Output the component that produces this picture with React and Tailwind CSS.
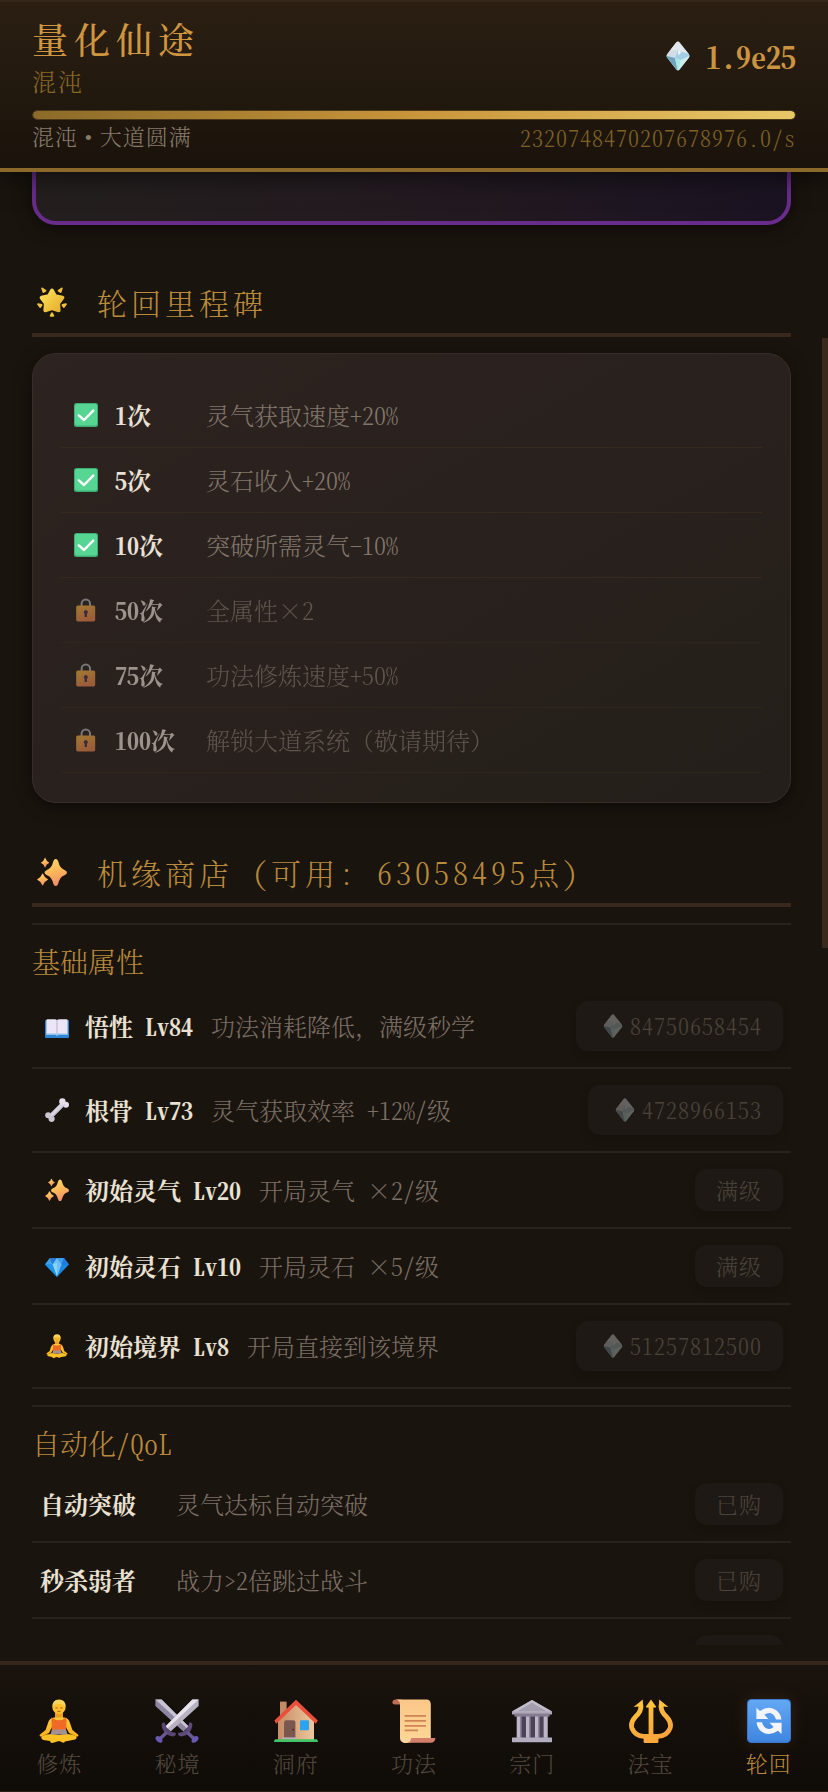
import React from "react";

/* ---------- Icons ---------- */

function SpiritStone({ className }) {
  return (
    <svg viewBox="0 0 24 30" className={className} aria-hidden="true">
      <path d="M12 0.4 Q13 0.4 13.8 1.6 L23 13.2 Q24 15 23 16.6 L13.6 28.8 Q12 30.4 10.4 28.8 L1 16.6 Q0 15 1 13.2 L10.2 1.6 Q11 0.4 12 0.4Z" fill="#b9dcea" />
      <path d="M12 0.6 L22.6 13 L12 9.5 L4 9.6 L10.2 1.6Z" fill="#e4e8ec" />
      <path d="M4 9.6 L12 9.5 L9 17 L0.6 15Z" fill="#d3dde8" />
      <path d="M12 9.5 L22.6 13 L23.4 15 L15 19 L9 17Z" fill="#a3cfe6" />
      <path d="M0.6 15 L9 17 L11.5 29.4 L1 16.6Z" fill="#6fa3bd" />
      <path d="M9 17 L15 19 L11.8 29.6Z" fill="#a5e8e4" />
      <path d="M23.4 15 L15 19 L12 29.6 L23 16.6Z" fill="#cdeeea" />
      <path d="M12 9.5 L15.5 11 L12.5 14.5Z" fill="#f4fbff" />
    </svg>
  );
}

function GlowingStar({ className }) {
  return (
    <svg viewBox="0 0 32 32" className={className} aria-hidden="true">
      <defs>
        <linearGradient id="star" x1="0" y1="0" x2="1" y2="1">
          <stop offset="0" stopColor="#ffe25a" />
          <stop offset="1" stopColor="#e2ad2c" />
        </linearGradient>
      </defs>
      <path
        d="M16 3.6 L19.4 9.8 L27.2 11.4 L22.6 17.6 L23.2 25 L16 22.6 L8.8 25 L9.4 17.6 L4.8 11.4 L12.6 9.8Z"
        fill="url(#star)" stroke="url(#star)" strokeWidth="4" strokeLinejoin="round"
      />
      <g fill="#f2c13a" stroke="#f2c13a" strokeWidth="2" strokeLinejoin="round">
        <path d="M5.6 1.6 L9 4 L6.8 5.4Z" />
        <path d="M26.4 1.6 L23 4 L25.2 5.4Z" />
        <path d="M1.2 18.4 L4.8 19.2 L3.4 21.4Z" />
        <path d="M30.8 18.4 L27.2 19.2 L28.6 21.4Z" />
        <path d="M14.6 30.6 L16 28 L17.4 30.6Z" />
      </g>
    </svg>
  );
}

function Sparkles({ className }) {
  return (
    <svg viewBox="0 0 32 32" className={className} aria-hidden="true">
      <defs>
        <linearGradient id="spark" x1="0" y1="0" x2="0.3" y2="1">
          <stop offset="0" stopColor="#ffdc6c" />
          <stop offset="0.55" stopColor="#fdb858" />
          <stop offset="1" stopColor="#f2906a" />
        </linearGradient>
      </defs>
      <g fill="url(#spark)">
        <path d="M20 2 Q21.8 2 22.6 4.6 Q24.4 12.4 29.4 13.8 Q32 14.8 32 16.6 Q32 18.4 29.4 19.4 Q24.4 21 22.6 28.4 Q21.8 31 20 31 Q18.2 31 17.4 28.4 Q15.6 21 10.6 19.4 Q8 18.4 8 16.6 Q8 14.8 10.6 13.8 Q15.6 12.4 17.4 4.6 Q18.2 2 20 2Z" />
        <path d="M8.6 0.6 Q10 4.8 13.2 6 Q10 7.2 8.6 11.4 Q7.2 7.2 4 6 Q7.2 4.8 8.6 0.6Z" />
        <path d="M6 17.4 Q7.8 22 12 24 Q7.8 26 6 30.6 Q4.2 26 0 24 Q4.2 22 6 17.4Z" />
      </g>
    </svg>
  );
}

function CheckMark({ className }) {
  return (
    <svg viewBox="0 0 24 24" className={className} aria-hidden="true">
      <rect width="24" height="24" rx="2.5" fill="#3fae74" />
      <rect x="1" y="1" width="22" height="21.5" rx="2" fill="#57d592" />
      <path d="M4.8 12.4 L10 17 L19.2 7.6" fill="none" stroke="#fff" strokeWidth="2.4" strokeLinecap="round" strokeLinejoin="round" />
    </svg>
  );
}

function Lock({ className }) {
  return (
    <svg viewBox="0 0 24 24" className={className} aria-hidden="true">
      <defs>
        <linearGradient id="lock" x1="0" y1="0" x2="0.4" y2="1">
          <stop offset="0" stopColor="#f2b53f" />
          <stop offset="1" stopColor="#e8844c" />
        </linearGradient>
      </defs>
      <path d="M7.6 9 V5.6 a4.2 4.2 0 0 1 8.4 0 V9" fill="none" stroke="#b4aeb4" strokeWidth="2" />
      <rect x="2.2" y="7.4" width="19" height="16" rx="1.6" fill="url(#lock)" />
      <path d="M11.8 12 a2.1 2.1 0 0 1 1.2 3.8 V19 H10.6 V15.8 a2.1 2.1 0 0 1 1.2 -3.8Z" fill="#4b3550" />
    </svg>
  );
}

function Book({ className }) {
  return (
    <svg viewBox="0 0 24 24" className={className} aria-hidden="true">
      <path d="M0 7 Q0 6 1 6 H23 Q24 6 24 7 V23 Q24 24 23 24 H1 Q0 24 0 23Z" fill="#2f86d4" />
      <path d="M1.4 6 Q1.4 5.2 2.6 5.2 H9.6 Q11.6 5.2 12 6.6 Q12.4 5.2 14.4 5.2 H21.4 Q22.6 5.2 22.6 6 V20.6 H14 Q12.6 20.6 12 21.8 Q11.4 20.6 10 20.6 H1.4Z" fill="#ece6f6" />
      <path d="M1.4 19.4 H10.4 Q11.6 19.4 12 20.8 Q12.4 19.4 13.6 19.4 H22.6 V21 H13.6 Q12.6 21 12 22.2 Q11.4 21 10.4 21 H1.4Z" fill="#8cc4ee" />
      <path d="M12 6.6 V20.6" stroke="#b5acc6" strokeWidth="0.9" />
    </svg>
  );
}

function Bone({ className }) {
  return (
    <svg viewBox="0 0 24 24" className={className} aria-hidden="true">
      <path d="M5.6 18.4 L18.4 5.6" stroke="#d9d3e0" strokeWidth="4.6" />
      <g fill="#e6e0ec">
        <circle cx="17.4" cy="3.4" r="3.2" />
        <circle cx="21" cy="6.8" r="3" />
      </g>
      <g fill="#cbc5d4">
        <circle cx="3.2" cy="17.2" r="3" />
        <circle cx="6.6" cy="20.8" r="3.1" />
      </g>
      <path d="M7 19.4 L19.6 7" stroke="#a9a2b4" strokeWidth="0.9" />
    </svg>
  );
}

function Gem({ className }) {
  return (
    <svg viewBox="0 0 24 24" className={className} aria-hidden="true">
      <path d="M5 4 H19 L24 10.4 L12 23 L0 10.4Z" fill="#1d86e0" />
      <path d="M5 4 L0 10.4 H7.4Z" fill="#3aa2ee" />
      <path d="M5 4 H12 L7.4 10.4Z" fill="#2b78d0" />
      <path d="M12 4 H19 L16.6 10.4Z" fill="#3d9ff0" />
      <path d="M19 4 L24 10.4 H16.6Z" fill="#2279d8" />
      <path d="M12 4 L16.6 10.4 L12 22.6 L7.4 10.4Z" fill="#6cc0f6" />
      <path d="M12 9 V22.6 L7.4 10.4Z" fill="#8dd0fa" />
      <path d="M0 10.4 H7.4 L12 23Z" fill="#1b94ec" />
    </svg>
  );
}

function Meditate({ className }) {
  return (
    <svg viewBox="0 0 44 44" className={className} aria-hidden="true">
      <defs>
        <linearGradient id="skin" x1="0" y1="0" x2="0" y2="1">
          <stop offset="0" stopColor="#ffc93a" />
          <stop offset="1" stopColor="#fdb21c" />
        </linearGradient>
      </defs>
      <path d="M18 12 H26 V19 H18Z" fill="#ee9f1e" />
      <path d="M17 18.4 Q12 19 11 24 L8.6 31 L3 35.4 Q1.6 37.6 4.6 37.4 L12 34 L16 26 H28 L32 34 L39.4 37.4 Q42.4 37.6 41 35.4 L35.4 31 L33 24 Q32 19 27 18.4Z" fill="url(#skin)" />
      <path d="M5 37 Q12 33.6 22 36 Q32 33.6 39 37 Q40.6 39.4 38 40.6 L28 42.4 Q26.8 44.6 24.6 43 L22 42 L16 43.8 Q13.6 44.6 13 42 L6.4 41 Q3 39.6 5 37Z" fill="#fbc024" />
      <path d="M14.4 18.6 Q22 24 29.6 18.6 L29 33 H15Z" fill="#ef6b25" />
      <path d="M15 30.4 H29 L30.6 35.6 H13.4Z" fill="#a59090" />
      <circle cx="22" cy="8.4" r="6.6" fill="#fdc02e" />
      <path d="M15.4 8 Q15 0.6 22 0.4 Q29 0.6 28.6 8 Q26.8 4.4 22 5 Q17.2 4.4 15.4 8Z" fill="#f6d55c" />
      <path d="M18.4 9 h2.4 M23.2 9 h2.4 M20.4 12.4 h3.2" stroke="#a5561c" strokeWidth="0.9" />
    </svg>
  );
}

function Swords({ className }) {
  return (
    <svg viewBox="0 0 44 44" className={className} aria-hidden="true">
      <g>
        <path d="M0.4 0.6 H6.6 L33.6 27.4 L28.4 32.6 L0.4 7Z" fill="#8e86a0" />
        <path d="M0.4 0.6 H6.6 L33.6 27.4 L31.8 29.2Z" fill="#c9c4d2" />
        <path d="M34.4 23.6 Q38.4 23 37 28.6 Q34.4 36.8 26.4 37.4 Q22 37.2 23.4 33.8 Q31.6 34.4 34.4 23.6Z" fill="#5d4a78" />
        <path d="M32.4 33.4 L39.6 40.2" stroke="#6a5796" strokeWidth="3.4" />
        <path d="M36.6 42.6 Q36 38.4 41 37 Q43 36.8 43.6 38.8 Q43.2 43 38.6 43.8 Q36.8 44 36.6 42.6Z" fill="#6759b4" />
      </g>
      <g>
        <path d="M43.6 0.6 H37.4 L10.4 27.4 L15.6 32.6 L43.6 7Z" fill="#b7b1c2" />
        <path d="M43.6 0.6 H37.4 L10.4 27.4 L12.4 29.4Z" fill="#e6e2ea" />
        <path d="M9.6 23.6 Q5.6 23 7 28.6 Q9.6 36.8 17.6 37.4 Q22 37.2 20.6 33.8 Q12.4 34.4 9.6 23.6Z" fill="#5a4675" />
        <path d="M11.6 33.4 L4.4 40.2" stroke="#6a5796" strokeWidth="3.4" />
        <path d="M7.4 42.6 Q8 38.4 3 37 Q1 36.8 0.4 38.8 Q0.8 43 5.4 43.8 Q7.2 44 7.4 42.6Z" fill="#6759b4" />
      </g>
    </svg>
  );
}

function House({ className }) {
  return (
    <svg viewBox="0 0 44 44" className={className} aria-hidden="true">
      <defs>
        <linearGradient id="wall" x1="0" y1="0" x2="1" y2="0">
          <stop offset="0" stopColor="#c98c66" />
          <stop offset="1" stopColor="#ecc79c" />
        </linearGradient>
      </defs>
      <rect x="6" y="2.6" width="6.6" height="16" fill="#c48a66" />
      <path d="M4 21 L22 4.6 L40 21 V41 H4Z" fill="url(#wall)" />
      <path d="M0.4 21.6 L22 0.8 L43.8 21.6 L41.8 24.8 L22 6 L2.2 24.8Z" fill="#ea4f3c" />
      <path d="M10 40 V23.6 Q10 21.2 12.4 21.2 H18.8 Q21.4 21.2 21.4 23.6 V40Z" fill="#7c5750" />
      <circle cx="19.2" cy="30.6" r="0.9" fill="#3c2a28" />
      <rect x="26" y="21.2" width="9" height="10" rx="1" fill="#2aa4f0" />
      <rect x="8.4" y="38.4" width="14.4" height="1.6" fill="#b9b0bf" />
      <path d="M1.4 40.2 H42.6 Q44 41 44 43 H0 Q0 41 1.4 40.2Z" fill="#41c463" />
    </svg>
  );
}

function Scroll({ className }) {
  return (
    <svg viewBox="0 0 44 44" className={className} aria-hidden="true">
      <defs>
        <linearGradient id="paper" x1="0" y1="0" x2="0" y2="1">
          <stop offset="0" stopColor="#fcc789" />
          <stop offset="1" stopColor="#fdd795" />
        </linearGradient>
      </defs>
      <path d="M0.4 3.6 Q0.6 0.4 4 0.4 H10 V5.6 H3 Q0.4 5.6 0.4 3.6Z" fill="#c06d58" />
      <path d="M4 0.4 H34.6 Q38.6 0.6 38.8 5 V40 L16 43.8 H12.6 Q8 43.6 8 38.6 V5.6 Q8 1.4 4 0.4Z" fill="url(#paper)" />
      <path d="M14.6 43.8 Q19 43 19 39 H43.4 Q43.2 43.8 38.4 43.8Z" fill="#d2806c" />
      <path d="M8 37 Q10 40.6 13.4 40 Q16.8 39.4 19 39 Q18.6 43.8 13.4 43.9 Q8.4 43.8 8 37Z" fill="#fbd5a0" />
      <path d="M12.6 16.8 H34 M12.6 21.8 H34 M12.6 26.8 H34 M12.6 31.4 H26" stroke="#ce8358" strokeWidth="1.7" />
    </svg>
  );
}

function Temple({ className }) {
  return (
    <svg viewBox="0 0 44 44" className={className} aria-hidden="true">
      <rect x="6" y="17" width="32" height="22" fill="#4e4258" />
      <path d="M2 12.6 L22 1 L42 12.6 V15.4 H2Z" fill="#aea7b6" />
      <path d="M22 1 L2 12.6 H42Z" fill="#c2bcc8" />
      <path d="M22 3.8 L7.4 12.2 H36.6Z" fill="#a49dad" />
      <rect x="4.4" y="14.6" width="35.2" height="3" fill="#857c92" />
      <g fill="#bdb6c6">
        <rect x="7" y="17.4" width="4.2" height="21.4" />
        <rect x="16" y="17.4" width="4.2" height="21.4" />
        <rect x="25" y="17.4" width="4.2" height="21.4" />
        <rect x="33.6" y="17.4" width="4" height="21.4" />
      </g>
      <g fill="#8c8399">
        <rect x="10" y="17.4" width="1.4" height="21.4" />
        <rect x="19" y="17.4" width="1.4" height="21.4" />
        <rect x="28" y="17.4" width="1.4" height="21.4" />
      </g>
      <rect x="2" y="38.4" width="40" height="4.8" rx="0.6" fill="#b4adbf" />
    </svg>
  );
}

function Trident({ className }) {
  return (
    <svg viewBox="0 0 44 44" className={className} aria-hidden="true">
      <defs>
        <linearGradient id="trident" gradientUnits="userSpaceOnUse" x1="0" y1="0" x2="16" y2="44">
          <stop offset="0" stopColor="#ffc93c" />
          <stop offset="1" stopColor="#f9a23c" />
        </linearGradient>
      </defs>
      <g fill="none" stroke="url(#trident)" strokeWidth="4.8">
        <path d="M11.6 5 Q13 12 6.6 17.6 Q1 23.6 3 29.4 Q6 37 15 37.4 H29 Q38 37 41 29.4 Q43 23.6 37.4 17.6 Q31 12 32.4 5" />
        <path d="M22 6 V38" />
      </g>
      <g fill="#ffc23c">
        <path d="M22 0.4 L27 7.6 Q27.4 8.8 25.6 8.6 H18.4 Q16.6 8.8 17 7.6Z" />
        <path d="M13.8 0.4 L14.2 9.6 L9.6 7.4 L4.6 8Z" />
        <path d="M30.2 0.4 L29.8 9.6 L34.4 7.4 L39.4 8Z" />
      </g>
      <path d="M14.6 38.4 H20.4 L22 30 L23.6 38.4 H29.4 V43 Q29.4 44 28.2 44 H15.8 Q14.6 44 14.6 43Z" fill="#fca93c" />
    </svg>
  );
}

function Cycle({ className }) {
  return (
    <svg viewBox="0 0 44 44" className={className} aria-hidden="true">
      <defs>
        <linearGradient id="cycle" x1="0" y1="0" x2="0" y2="1">
          <stop offset="0" stopColor="#62a8f4" />
          <stop offset="1" stopColor="#3f86e0" />
        </linearGradient>
      </defs>
      <rect width="44" height="44" rx="4.6" fill="#3a78d2" />
      <rect x="1" y="1" width="42" height="41.4" rx="4" fill="url(#cycle)" />
      <g fill="#f4f4fc">
        <path d="M9.4 8.8 L13 12 Q22 5.8 29.6 11.4 Q34 15 34.4 20.6 H29 Q27.6 15.4 23.4 14 Q20 13.4 17.4 15.8 L21.4 20 H9.4Z" />
        <path d="M34.6 35 L31 31.8 Q22 38 14.4 32.4 Q10 28.8 9.6 23.2 H15 Q16.4 28.4 20.6 29.8 Q24 30.4 26.6 28 L22.6 23.8 H34.6Z" />
      </g>
    </svg>
  );
}

/* ---------- Data ---------- */

const MILESTONES = [
  { count: "1次", desc: "灵气获取速度+20%", done: true },
  { count: "5次", desc: "灵石收入+20%", done: true },
  { count: "10次", desc: "突破所需灵气-10%", done: true },
  { count: "50次", desc: "全属性×2", done: false },
  { count: "75次", desc: "功法修炼速度+50%", done: false },
  { count: "100次", desc: "解锁大道系统（敬请期待）", done: false, wide: true },
];

// wide: keep the full-width punctuation in the description
const BASE_UPGRADES = [
  { icon: Book, name: "悟性 Lv84", desc: "功法消耗降低，满级秒学", cost: "84750658454", wide: true },
  { icon: Bone, name: "根骨 Lv73", desc: "灵气获取效率 +12%/级", cost: "4728966153" },
  { icon: Sparkles, name: "初始灵气 Lv20", desc: "开局灵气 ×2/级", status: "满级" },
  { icon: Gem, name: "初始灵石 Lv10", desc: "开局灵石 ×5/级", status: "满级" },
  { icon: Meditate, name: "初始境界 Lv8", desc: "开局直接到该境界", cost: "51257812500" },
];

const AUTO_UPGRADES = [
  { name: "自动突破", desc: "灵气达标自动突破", status: "已购" },
  { name: "秒杀弱者", desc: "战力>2倍跳过战斗", status: "已购" },
  { name: "", desc: "", status: "" },
];

const TABS = [
  { icon: Meditate, label: "修炼" },
  { icon: Swords, label: "秘境" },
  { icon: House, label: "洞府" },
  { icon: Scroll, label: "功法" },
  { icon: Temple, label: "宗门" },
  { icon: Trident, label: "法宝" },
  { icon: Cycle, label: "轮回", active: true },
];

/* ---------- Parts ---------- */

function Header() {
  return (
    <header className="relative z-10 shrink-0 border-t-2 border-t-[#35281a] border-b-4 border-b-[#8b692b] bg-linear-to-b from-[#2b1f12] to-[#1a130b] px-8 pt-3 pb-3 shadow-[0_4px_24px_rgba(0,0,0,0.6)]">
      <div className="flex items-center justify-between">
        <div>
          <h1 className="text-[36px] leading-[50px] font-medium tracking-[6px] text-[#cf9640]">量化仙途</h1>
          <p className="text-[24px] leading-[34px] tracking-[2px] text-[#876826]">混沌</p>
        </div>
        <div className="flex items-center gap-4 text-[30px] leading-[44px] font-bold text-[#cb9440]">
          <SpiritStone className="h-[30px] w-6" />
          <span>1.9e25</span>
        </div>
      </div>
      <div className="mt-3 h-[10px] overflow-hidden rounded-full border border-[#4a3818] bg-black/40">
        <div className="h-full w-full rounded-full bg-linear-to-r from-[#8b6b29] via-[#c9953b] to-[#e8c766]" />
      </div>
      <div className="flex items-center justify-between text-[22px] leading-[36px] tracking-[1px]">
        <span className="text-[#877a6a] [font-family:'Liberation_Serif','Noto_Serif_CJK_SC',serif]">混沌 • 大道圆满</span>
        <span className="text-[#7d6125]">2320748470207678976.0/s</span>
      </div>
    </header>
  );
}

function SectionTitle({ icon: Icon, children }) {
  return (
    <h2 className="mb-4 flex items-center gap-[30px] border-b-4 border-[#38291c] pb-[10px] pl-[5px] text-[30px] leading-[42px] tracking-[4px] text-[#b98a3c]">
      <Icon className="size-[30px]" />
      <span>{children}</span>
    </h2>
  );
}

function Milestone({ count, desc, done, wide }) {
  const Icon = done ? CheckMark : Lock;
  return (
    <li className={`flex h-[65px] items-center border-b border-[#352a1d] px-[13px] text-[24px] ${done ? "" : "opacity-60"}`}>
      <Icon className="size-6" />
      <strong className="ml-[17px] w-[91px] font-bold text-[#e9e1d6]">{count}</strong>
      <span className={`text-[#81766b] ${wide ? "[font-feature-settings:normal]" : ""}`}>{desc}</span>
    </li>
  );
}

function UpgradeRow({ icon: Icon, name, desc, cost, status, wide }) {
  return (
    <li className="flex items-center justify-between border-b-2 border-[#29231d] px-2 py-4">
      <div className="flex items-center gap-[18px] text-[24px] leading-[34px]">
        <div className="flex min-w-[118px] items-center gap-4">
          {Icon && <Icon className="ml-[5px] size-6" />}
          <strong className="font-bold text-[#e9e1d2]">{name}</strong>
        </div>
        <span className={`text-[#7a6f65] ${wide ? "[font-feature-settings:normal]" : ""}`}>{desc}</span>
      </div>
      <button
        type="button"
        disabled
        className="flex min-h-[42px] min-w-[88px] items-center rounded-xl bg-[#1e1914] px-[21px] py-1 text-[22px] leading-[34px] tracking-[1px] text-[#4a433b] shadow-[0_4px_8px_rgba(0,0,0,0.15)]"
      >
        {cost && (
          <span className="flex h-[42px] w-[33px] items-center pl-[6px]">
            <SpiritStone className="h-6 w-5 opacity-35 grayscale-50" />
          </span>
        )}
        {cost || status}
      </button>
    </li>
  );
}

function UpgradeGroup({ title, items }) {
  return (
    <section className="mb-4 border-t-2 border-[#29231d] pt-4">
      <h3 className="mb-1 text-[28px] leading-[40px] text-[#b98a3c]">{title}</h3>
      <ul>
        {items.map((item, i) => (
          <UpgradeRow key={i} {...item} />
        ))}
      </ul>
    </section>
  );
}

function TabBar() {
  return (
    <nav className="flex shrink-0 border-t-4 border-b border-t-[#35271b] border-b-[#2c2115] bg-linear-to-b from-[#1a130e] to-[#0f0b07] pt-[34px] pb-3">
      {TABS.map(({ icon: Icon, label, active }) => (
        <button
          key={label}
          type="button"
          className={`flex flex-1 flex-col items-center gap-1 text-[22px] leading-[32px] tracking-[1px] ${active ? "text-[#b98a3c]" : "text-[#51483e]"}`}
        >
          <Icon className={`size-11 ${active ? "drop-shadow-[0_0_8px_rgba(201,149,59,0.15)]" : ""}`} />
          {label}
        </button>
      ))}
    </nav>
  );
}

export default function App() {
  return (
    <div className="flex h-screen flex-col bg-[#1a140e] font-light [font-family:'Noto_Serif_CJK_SC','Noto_Sans_CJK_SC',serif] [font-feature-settings:'hwid']">
      <Header />

      <main className="mb-4 flex min-h-0 flex-1 overflow-hidden">
        <div className="min-w-0 flex-1 pr-[31px] pl-8">
          {/* tail of the reincarnation card, scrolled under the header */}
          <div className="h-[53px] rounded-b-3xl border-4 border-t-0 border-[#682c8a] bg-linear-to-r from-[#241f1e] via-[#231a20] to-[#1b1322] shadow-[0_4px_16px_rgba(0,0,0,0.5)]" />

          <section className="mt-14">
            <SectionTitle icon={GlowingStar}>轮回里程碑</SectionTitle>
            <ul className="rounded-3xl border border-[#372e28] bg-linear-to-br from-[#2d2320] to-[#241f1a] px-7 py-[29px] shadow-[0_4px_16px_rgba(0,0,0,0.5)]">
              {MILESTONES.map((m) => (
                <Milestone key={m.count} {...m} />
              ))}
            </ul>
          </section>

          <section className="mt-12">
            <SectionTitle icon={Sparkles}>机缘商店 (可用: 63058495点)</SectionTitle>
            <UpgradeGroup title="基础属性" items={BASE_UPGRADES} />
            <UpgradeGroup title="自动化/QoL" items={AUTO_UPGRADES} />
          </section>
        </div>

        {/* scrollbar */}
        <div className="w-[6px] shrink-0">
          <div className="mt-[166px] h-[610px] bg-[#38291c]" />
        </div>
      </main>

      <TabBar />
    </div>
  );
}
